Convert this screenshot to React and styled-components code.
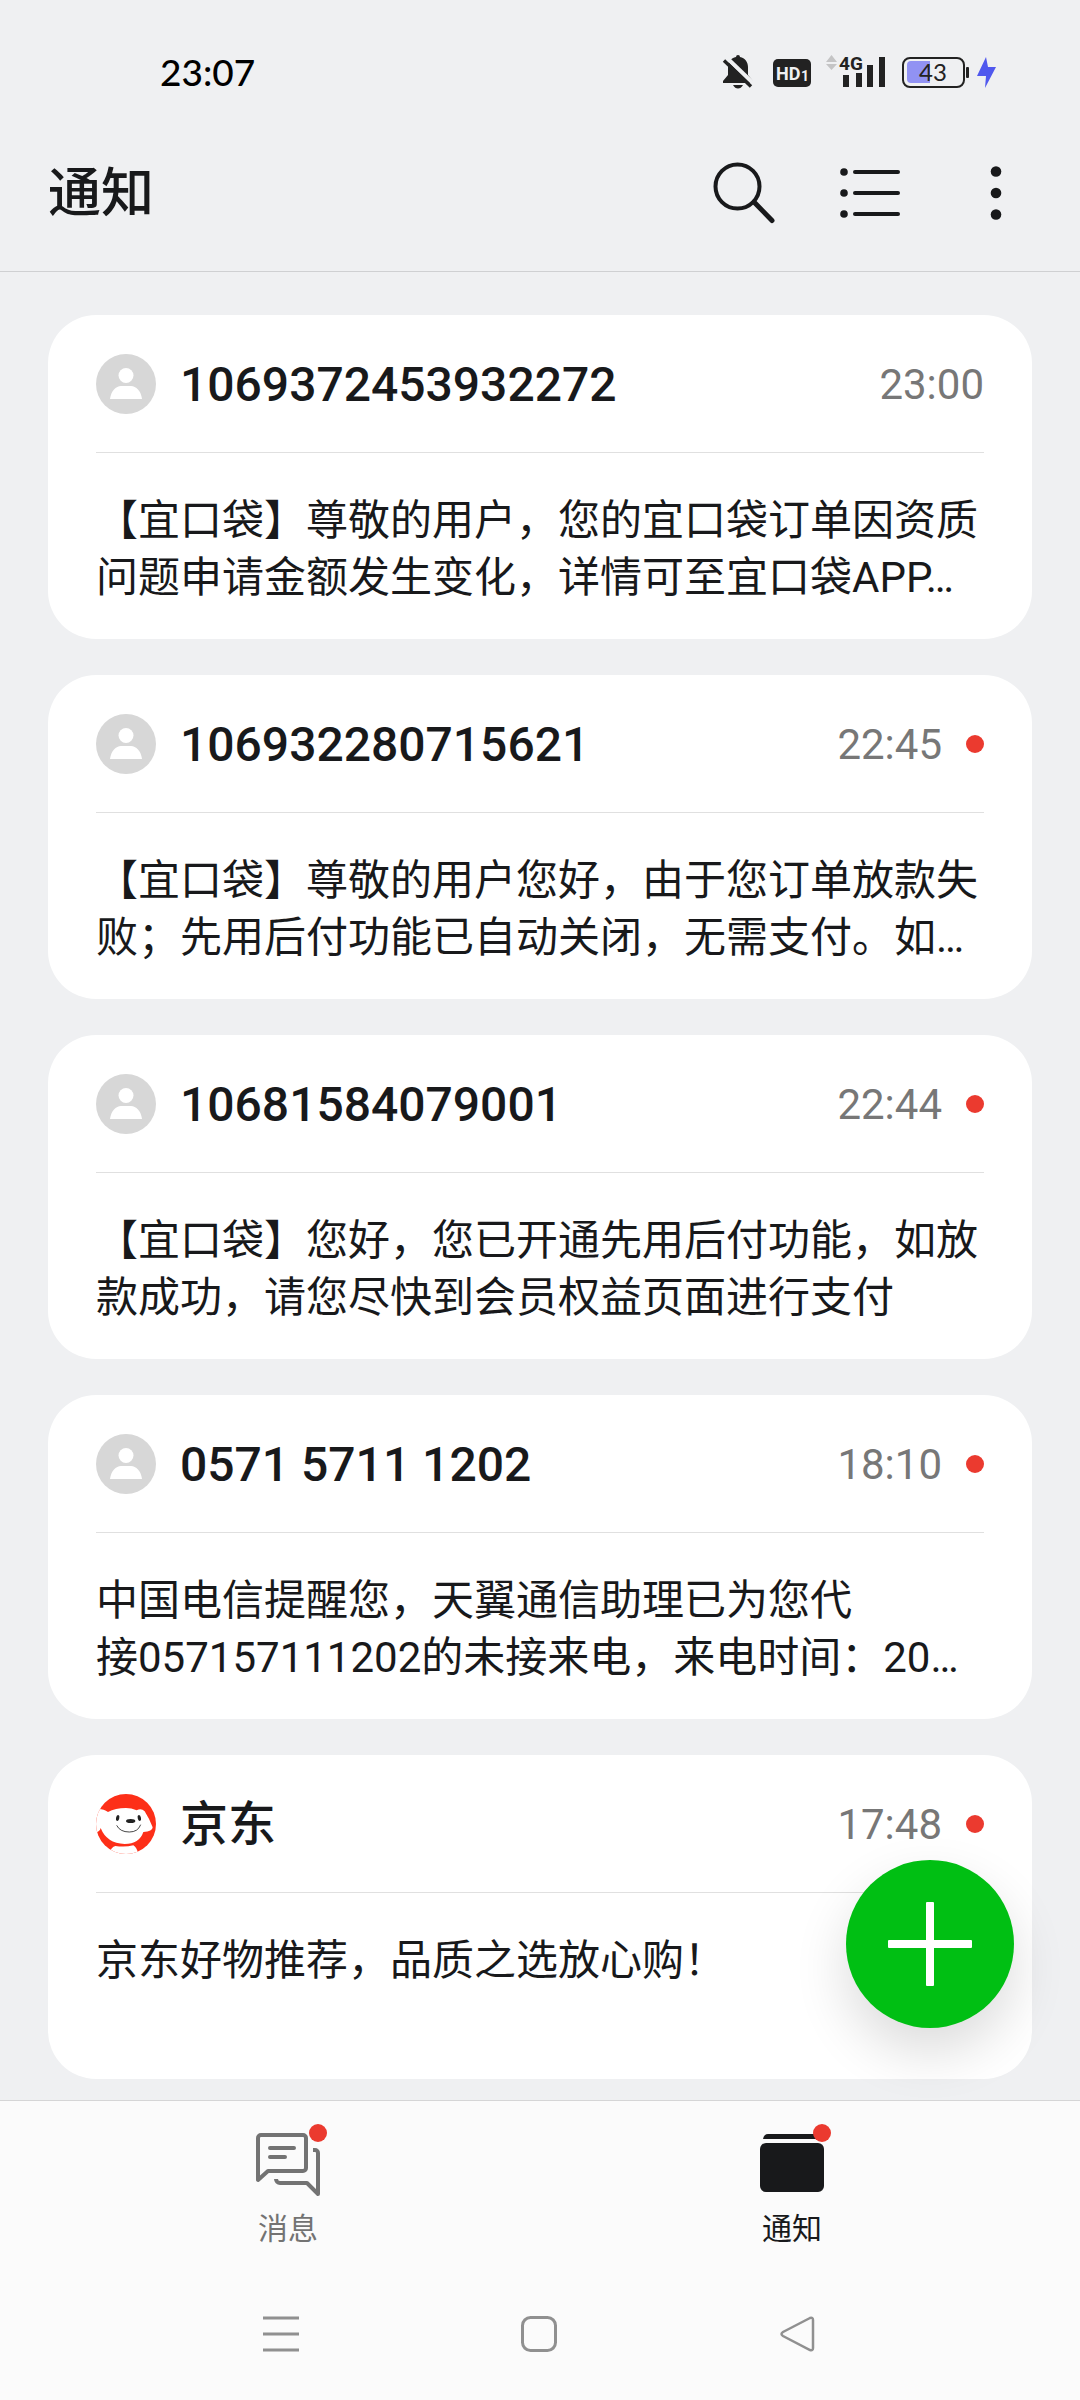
import styled, { createGlobalStyle } from "styled-components";

const GlobalStyle = createGlobalStyle`
  * {
    box-sizing: border-box;
  }
  body {
    margin: 0;
    background-color: #eff0f2;
    color: #18191b;
    font-family: Roboto, "Noto Sans CJK SC", sans-serif;
  }
  svg {
    display: block;
  }
  button {
    border: none;
    padding: 0;
    background: none;
    color: inherit;
    font: inherit;
    cursor: pointer;
  }
`;

const Container = styled.div`
  min-height: 100vh;
  display: flex;
  flex-direction: column;
`;

const StatusBar = styled.div`
  height: 114px;
  padding: 30px 84px 0 160px;
  display: flex;
  justify-content: space-between;
`;

const Clock = styled.span`
  padding-top: 20px;
  font-family: Lato, sans-serif;
  font-size: 37px;
  font-weight: 500;
  line-height: 44px;
  color: #000;
`;

const StatusIcons = styled.div`
  height: 84px;
  display: flex;
  align-items: center;
`;

const Header = styled.header`
  height: 158px;
  padding: 0 36px 0 48px;
  display: flex;
  justify-content: space-between;
  align-items: center;
  border-bottom: 1px solid #cfd0d2;
`;

const Title = styled.h1`
  margin: 0;
  padding-top: 3px;
  font-size: 53px;
  font-weight: 500;
  line-height: 72px;
`;

const Actions = styled.div`
  display: flex;
  gap: 30px;
`;

const IconButton = styled.button`
  width: 96px;
  height: 96px;
  display: flex;
  justify-content: center;
  align-items: center;
`;

const Main = styled.main`
  flex: 1;
  position: relative;
  padding: 43px 48px 21px;
`;

const List = styled.ul`
  margin: 0;
  padding: 0;
  list-style: none;
  display: flex;
  flex-direction: column;
  gap: 36px;
`;

const Card = styled.li`
  padding: 0 48px 33px;
  border-radius: 48px;
  background-color: #fff;
`;

const CardHeader = styled.div`
  height: 138px;
  display: flex;
  align-items: center;
  gap: 24px;
  border-bottom: 1px solid #e0e0e0;
`;

const Sender = styled.h2`
  flex: 1;
  margin: 0;
  padding-top: 3px;
  font-size: 48px;
  font-weight: 500;
  line-height: 60px;
`;

const Time = styled.time`
  padding-top: 3px;
  font-size: 42px;
  line-height: 60px;
  color: #777;
`;

const Dot = styled.span`
  width: 18px;
  height: 18px;
  border-radius: 50%;
  background-color: #eb3a2f;
`;

const Message = styled.p`
  margin: 39px 0 0;
  min-height: 114px;
  font-size: 42px;
  font-weight: 400;
  line-height: 57px;
  white-space: pre-line;
`;

const ComposeButton = styled.button`
  position: absolute;
  right: 66px;
  bottom: 72px;
  width: 168px;
  height: 168px;
  border-radius: 50%;
  background-color: #00bf13;
  box-shadow: 0 24px 54px rgba(0, 0, 0, 0.14);
  display: flex;
  justify-content: center;
  align-items: center;
`;

const Footer = styled.footer`
  position: relative;
  background-color: #fbfbfb;
  border-top: 1px solid #d5d5d6;
`;

const Tabs = styled.nav`
  height: 180px;
  padding: 0 36px;
  display: flex;
`;

const Tab = styled.a`
  flex: 1;
  padding-top: 32px;
  display: flex;
  flex-direction: column;
  align-items: center;
  gap: 10px;
  color: ${(props) => (props.$active ? "#18191b" : "#737373")};
  text-decoration: none;
`;

const TabIcon = styled.span`
  position: relative;
`;

const Badge = styled(Dot)`
  position: absolute;
  top: -9px;
  right: -7px;
`;

const TabLabel = styled.span`
  font-size: 30px;
  line-height: 44px;
`;

const SystemNav = styled.div`
  height: 119px;
  padding: 0 154px 0 152px;
  display: flex;
`;

const SystemButton = styled.button`
  flex: 1;
  padding-bottom: 14px;
  display: flex;
  justify-content: center;
  align-items: center;
`;

const StatusGlyphs = () => (
  <svg width="276" height="40" viewBox="720 52 276 40" aria-hidden="true">
    <path
      d="M738 55a2 2 0 0 1 2 2c5 1 8 5 8 10v8l5 6v2H723v-2l5-6v-8c0-5 3-9 8-10a2 2 0 0 1 2-2z"
      fill="#222"
    />
    <path d="M733 85h10q-2 3.500-5 3.500t-5-3.500z" fill="#222" />
    <path d="M727 58l28 27" stroke="#eff0f2" strokeWidth="4" />
    <path d="M724 60.500l27 26" stroke="#222" strokeWidth="3.400" />
    <rect x="773" y="59" width="38" height="28" rx="5" fill="#222" />
    <text x="776" y="80" fontFamily="Roboto" fontSize="18" fontWeight="700" fill="#eff0f2">
      HD
    </text>
    <text x="801" y="81" fontFamily="Roboto" fontSize="14" fontWeight="700" fill="#eff0f2">
      1
    </text>
    <path d="M826 62l5.500-7 5.500 7zM826 64l5.500 6 5.500-6z" fill="#c4c4c5" />
    <text x="839" y="70" fontFamily="Roboto" fontSize="19" fontWeight="700" fill="#222">
      4G
    </text>
    <path d="M843 75h6v12h-6zM856 73h6v14h-6zM867 65h6v22h-6zM879 57h6v30h-6z" fill="#222" />
    <rect x="903" y="58" width="61" height="29" rx="7" fill="none" stroke="#222" strokeWidth="2" />
    <path d="M907 65a4 4 0 0 1 4-4h19v22h-19a4 4 0 0 1-4-4z" fill="#9192f3" />
    <rect x="966" y="67" width="3" height="11" rx="1" fill="#222" />
    <text x="933" y="81" fontFamily="Lato" fontSize="24" textAnchor="middle" fill="#222">
      43
    </text>
    <path d="M986 57l-9 19h9l-1 12 11-21h-8z" fill="#5058ee" />
  </svg>
);

const SearchIcon = () => (
  <svg width="64" height="64" fill="none" stroke="#18191b" strokeLinecap="round">
    <circle cx="25.500" cy="25.500" r="22" strokeWidth="4" />
    <path d="M42 41l18 18.500" strokeWidth="5" />
  </svg>
);

const ListIcon = () => (
  <svg width="60" height="52" fill="#18191b">
    {[5, 26, 47].map((y) => (
      <g key={y}>
        <circle cx="4" cy={y} r="3.800" />
        <rect x="13" y={y - 2} width="47" height="4" rx="2" />
      </g>
    ))}
  </svg>
);

const MoreIcon = () => (
  <svg width="12" height="56" fill="#18191b">
    <circle cx="6" cy="6.500" r="5.300" />
    <circle cx="6" cy="28" r="5.300" />
    <circle cx="6" cy="49.500" r="5.300" />
  </svg>
);

const PersonAvatar = () => (
  <svg width="60" height="60" aria-hidden="true">
    <circle cx="30" cy="30" r="30" fill="#d7d7d7" />
    <circle cx="30" cy="21.500" r="7.500" fill="#fff" />
    <path d="M14 45c1-8 6-13 11-13h10c5 0 10 5 11 13z" fill="#fff" />
  </svg>
);

const JdAvatar = () => (
  <svg width="60" height="60" viewBox="0 0 180 180" aria-hidden="true">
    <clipPath id="jd">
      <circle cx="90" cy="90" r="90" />
    </clipPath>
    <g clipPath="url(#jd)">
      <rect width="180" height="180" fill="#fd2f18" />
      <path
        d="M-4 46Q20 42 36 54Q58 42 90 42Q106 42 122 49Q136 42 146 52Q160 74 170 100Q170 112 142 114Q130 150 86 150Q32 148 14 102Q12 112-4 118z"
        fill="#fff"
      />
      <path d="M38 182Q46 158 58 156Q88 160 112 154Q122 160 128 182z" fill="#fff" />
      <ellipse cx="65" cy="72" rx="5" ry="9" fill="#222" transform="rotate(12 65 72)" />
      <ellipse cx="130" cy="72" rx="5" ry="9" fill="#222" transform="rotate(-12 130 72)" />
      <ellipse cx="104" cy="81" rx="14" ry="6" fill="#222" />
      <path d="M62 94Q72 114 100 114Q126 114 134 92" fill="none" stroke="#222" strokeWidth="2.500" />
    </g>
  </svg>
);

const MessagesIcon = () => (
  <svg
    width="64"
    height="64"
    fill="none"
    stroke="#737373"
    strokeWidth="4"
    strokeLinecap="round"
    strokeLinejoin="round"
  >
    <path d="M2 47V5a3 3 0 0 1 3-3h42a3 3 0 0 1 3 3v30a3 3 0 0 1-3 3H12z" />
    <path d="M14 15h24M14 24h15" />
    <path d="M57 17h2a3 3 0 0 1 3 3v41L51 50H24a4 4 0 0 1-4-4" strokeLinecap="butt" />
  </svg>
);

const NoticesIcon = () => (
  <svg width="64" height="64" fill="#18191b">
    <path d="M3 6q1-5 5-5h49v5z" />
    <rect y="10" width="64" height="49" rx="6" />
  </svg>
);

const notices = [
  {
    sender: "1069372453932272",
    time: "23:00",
    text: "【宜口袋】尊敬的用户，您的宜口袋订单因资质问题申请金额发生变化，详情可至宜口袋APP…",
  },
  {
    sender: "106932280715621",
    time: "22:45",
    unread: true,
    text: "【宜口袋】尊敬的用户您好，由于您订单放款失败；先用后付功能已自动关闭，无需支付。如…",
  },
  {
    sender: "10681584079001",
    time: "22:44",
    unread: true,
    text: "【宜口袋】您好，您已开通先用后付功能，如放款成功，请您尽快到会员权益页面进行支付",
  },
  {
    sender: "0571 5711 1202",
    time: "18:10",
    unread: true,
    text: "中国电信提醒您，天翼通信助理已为您代\n接057157111202的未接来电，来电时间：20…",
  },
  {
    sender: "京东",
    time: "17:48",
    unread: true,
    brand: true,
    text: "京东好物推荐，品质之选放心购！",
  },
];

const Notice = ({ item }) => (
  <Card>
    <CardHeader>
      {item.brand ? <JdAvatar /> : <PersonAvatar />}
      <Sender>{item.sender}</Sender>
      <Time>{item.time}</Time>
      {item.unread && <Dot />}
    </CardHeader>
    <Message>{item.text}</Message>
  </Card>
);

const App = () => {
  return (
    <Container lang="zh-CN">
      <GlobalStyle />
      <StatusBar>
        <Clock>23:07</Clock>
        <StatusIcons>
          <StatusGlyphs />
        </StatusIcons>
      </StatusBar>
      <Header>
        <Title>通知</Title>
        <Actions>
          <IconButton aria-label="搜索">
            <SearchIcon />
          </IconButton>
          <IconButton aria-label="列表">
            <ListIcon />
          </IconButton>
          <IconButton aria-label="更多">
            <MoreIcon />
          </IconButton>
        </Actions>
      </Header>
      <Main>
        <List>
          {notices.map((item) => (
            <Notice item={item} key={item.sender} />
          ))}
        </List>
        <ComposeButton aria-label="新建">
          <svg width="84" height="84" fill="#fff">
            <rect x="38" width="8" height="84" rx="1" />
            <rect y="38" width="84" height="8" rx="1" />
          </svg>
        </ComposeButton>
      </Main>
      <Footer>
        <Tabs>
          <Tab href="#messages">
            <TabIcon>
              <MessagesIcon />
              <Badge />
            </TabIcon>
            <TabLabel>消息</TabLabel>
          </Tab>
          <Tab href="#notices" $active>
            <TabIcon>
              <NoticesIcon />
              <Badge />
            </TabIcon>
            <TabLabel>通知</TabLabel>
          </Tab>
        </Tabs>
        <SystemNav>
          <SystemButton aria-label="最近任务">
            <svg width="36" height="36" stroke="#909090" strokeWidth="3">
              <path d="M0 2h36M0 18h36M0 34h36" />
            </svg>
          </SystemButton>
          <SystemButton aria-label="主屏幕">
            <svg width="36" height="36" fill="none" stroke="#909090" strokeWidth="3">
              <rect x="1.500" y="1.500" width="33" height="33" rx="8" />
            </svg>
          </SystemButton>
          <SystemButton aria-label="返回">
            <svg width="36" height="36" fill="none" stroke="#909090" strokeWidth="2.500">
              <path d="M31 2L4 16Q1 18 4 20L31 34Q34 35 34 32V4Q34 1 31 2z" />
            </svg>
          </SystemButton>
        </SystemNav>
      </Footer>
    </Container>
  );
};

export default App;
